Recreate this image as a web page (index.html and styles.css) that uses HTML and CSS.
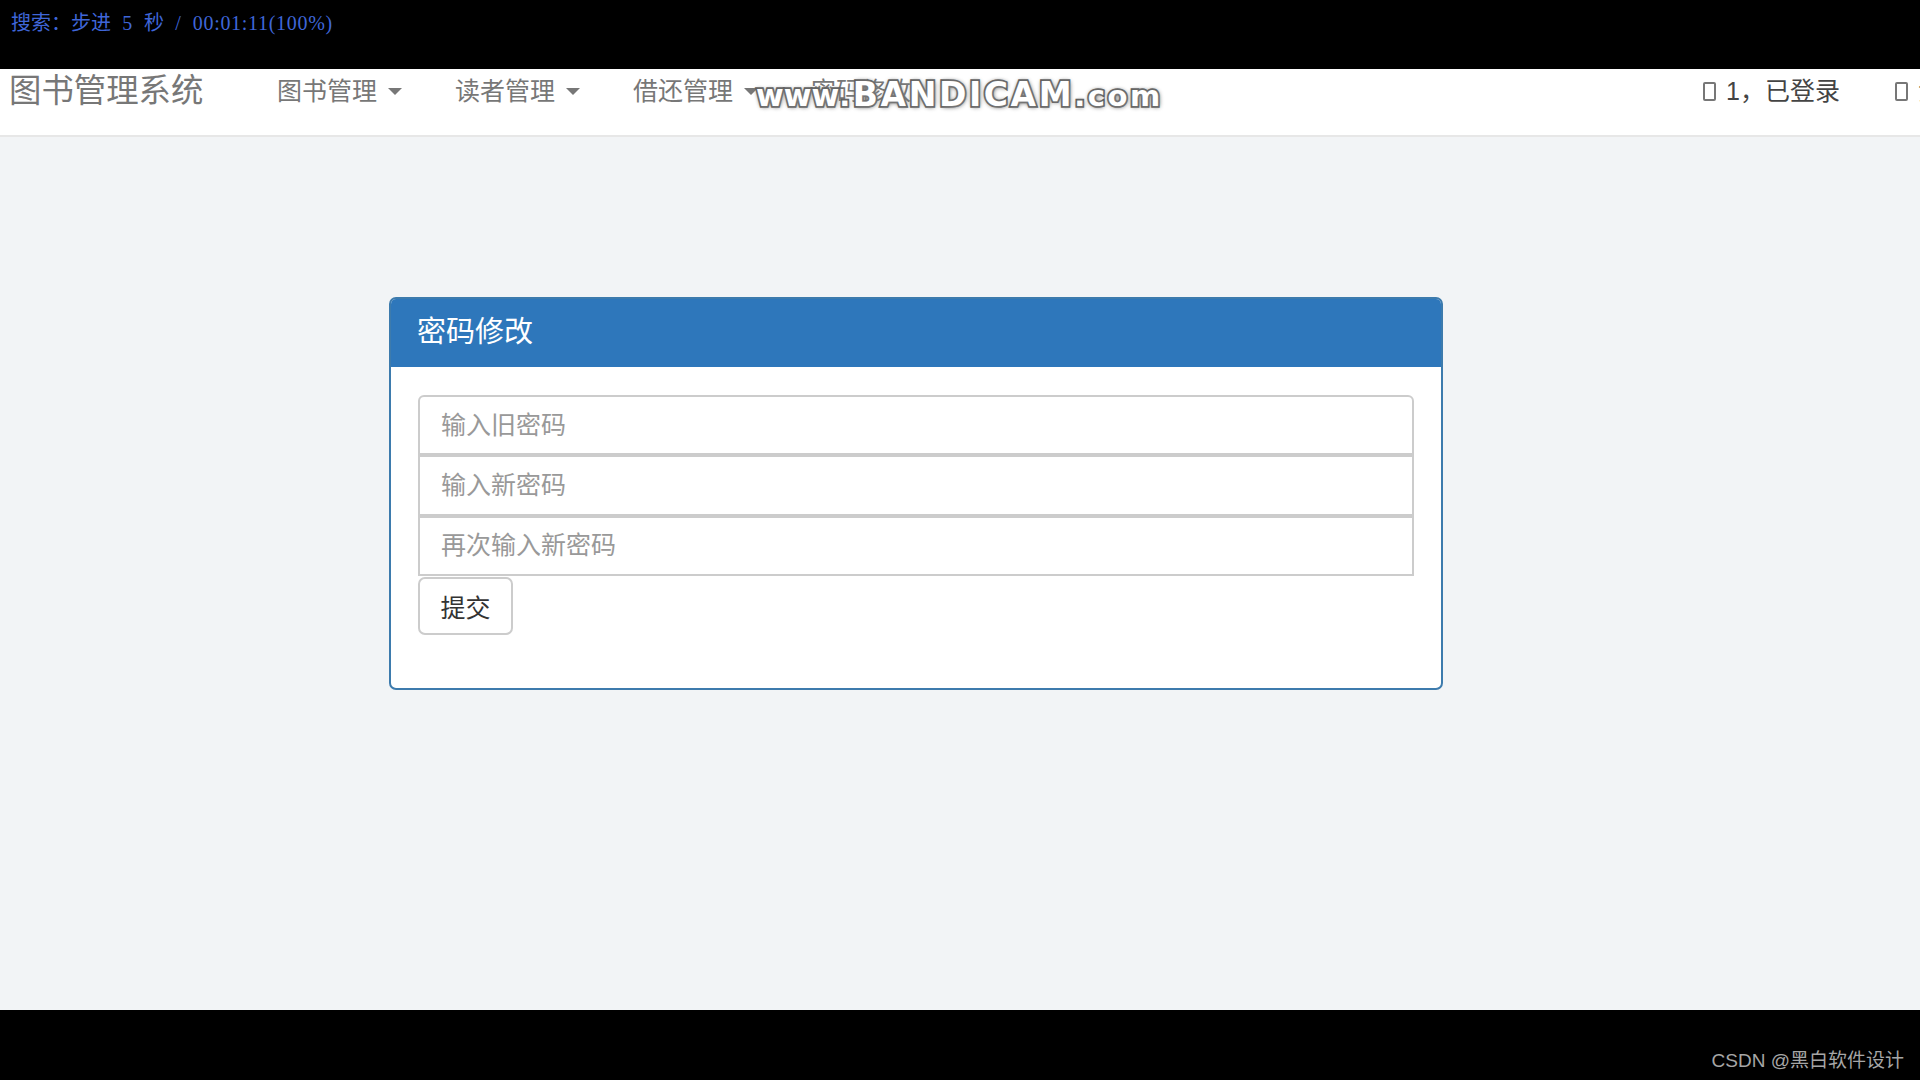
FILE: index.html
```html
<!DOCTYPE html>
<html lang="zh-CN">
<head>
  <meta charset="UTF-8">
  <title>图书管理系统</title>
  <link rel="stylesheet" href="styles.css">
</head>
<body>

  <div class="player-top">
    <span class="osd"><span class="osd-cjk">搜索：步进</span> 5 <span class="osd-cjk">秒</span> / 00:01:11(100%)</span>
  </div>

  <nav class="navbar">
    <a class="brand">图书管理系统</a>
    <ul class="nav-menu">
      <li>图书管理<span class="caret"></span></li>
      <li>读者管理<span class="caret"></span></li>
      <li>借还管理<span class="caret"></span></li>
      <li>密码修改</li>
    </ul>
    <div class="nav-right">
      <span class="nav-user"><span class="tofu"></span>1，已登录</span>
      <span class="nav-user"><span class="tofu"></span>注销</span>
    </div>
    <div class="watermark"><span class="wm-www">www</span><span class="wm-com">.</span><span class="wm-name">BANDICAM</span><span class="wm-com">.com</span></div>
  </nav>

  <main class="content">
    <section class="panel">
      <div class="panel-heading">密码修改</div>
      <form class="panel-body">
        <input class="form-input" type="password" placeholder="输入旧密码">
        <input class="form-input" type="password" placeholder="输入新密码">
        <input class="form-input" type="password" placeholder="再次输入新密码">
        <button class="btn" type="button">提交</button>
      </form>
    </section>
  </main>

  <footer class="player-bottom">
    <span class="credit">CSDN @黑白软件设计</span>
  </footer>

</body>
</html>
```
FILE: styles.css
```css
html, body {
  margin: 0;
  padding: 0;
  height: 100%;
}
body {
  display: flex;
  flex-direction: column;
  width: 1920px;
  height: 1080px;
  overflow: hidden;
  background: #000;
  font-family: "Liberation Sans", "Noto Sans CJK SC", sans-serif;
}

/* Player bars */
.player-top {
  height: 69px;
  flex: none;
  background: #000;
  padding: 10px 0 0 11px;
  box-sizing: border-box;
}
.osd {
  display: block;
  color: #3f66d8;
  font-family: "Liberation Serif", "Noto Sans CJK SC", serif;
  font-size: 20px;
  letter-spacing: 0.7px;
  word-spacing: 5.5px;
  line-height: 24px;
  white-space: pre;
}
.osd-cjk {
  font-family: "Noto Sans CJK SC", sans-serif;
  letter-spacing: 0;
}
.player-bottom {
  height: 70px;
  flex: none;
  background: #000;
  display: flex;
  justify-content: flex-end;
  align-items: flex-start;
  padding: 39px 16px 0 0;
  box-sizing: border-box;
}
.credit {
  color: #a6a6a6;
  font-size: 19px;
  line-height: 24px;
}

/* Navbar */
.navbar {
  position: relative;
  height: 68px;
  flex: none;
  box-sizing: border-box;
  background: #fff;
  border-bottom: 2px solid #e7e7e7;
  display: flex;
  align-items: flex-start;
  color: #777;
  overflow: hidden;
}
.brand {
  margin-left: 9px;
  font-size: 32.4px;
  line-height: 44px;
  width: 268px;
  flex: none;
}
.nav-menu {
  list-style: none;
  margin: 0;
  padding: 0;
  display: flex;
  font-size: 25px;
  line-height: 36px;
  padding-top: 4px;
}
.nav-menu li {
  display: flex;
  align-items: center;
  width: 178px;
  flex: none;
}
.caret {
  width: 0;
  height: 0;
  margin-left: 11px;
  border-top: 7px solid #777;
  border-left: 7px solid transparent;
  border-right: 7px solid transparent;
}
.nav-right {
  position: absolute;
  top: 4px;
  left: 1703px;
  display: flex;
  gap: 55px;
  font-size: 25px;
  line-height: 36px;
  color: #444;
  white-space: nowrap;
}
.nav-user {
  display: flex;
  align-items: center;
}
.tofu {
  width: 13px;
  height: 19px;
  box-sizing: border-box;
  border: 2px solid #777;
  border-radius: 2px;
  margin-right: 10px;
}

/* BANDICAM watermark, lies over the menu */
.watermark {
  position: absolute;
  top: 8px;
  left: 756px;
  color: #fff;
  font-family: "DejaVu Sans", sans-serif;
  font-weight: bold;
  line-height: 36px;
  white-space: nowrap;
  -webkit-text-stroke: 3.5px #5a5a5a;
  paint-order: stroke fill;
  text-shadow: 0 0 4px #777, 1px 1px 5px #888;
}
.wm-www {
  font-size: 30px;
}
.wm-name {
  font-size: 33px;
  letter-spacing: 2.6px;
}
.wm-com {
  font-size: 29px;
  letter-spacing: 2.6px;
}

/* Panel */
.content {
  flex: 1;
  background: #f2f4f6;
  padding: 160px 0 0 389px;
  box-sizing: border-box;
}
.panel {
  width: 1054px;
  height: 393px;
  box-sizing: border-box;
  background: #fff;
  border: 2px solid #3d7bad;
  border-radius: 7px;
  overflow: hidden;
}
.panel-heading {
  height: 68px;
  box-sizing: border-box;
  background: #2e77bb;
  color: #fff;
  font-size: 29px;
  line-height: 66px;
  padding-left: 26px;
}
.panel-body {
  display: flex;
  flex-direction: column;
  align-items: flex-start;
  padding: 28px 27px 0 27px;
}
.form-input {
  display: block;
  width: 100%;
  height: 60.33px;
  box-sizing: border-box;
  border: 2px solid #ccc;
  background: #fff;
  padding: 0 21px;
  font-family: inherit;
  font-size: 25px;
  color: #555;
  outline: none;
}
.form-input:first-child {
  border-radius: 6px 6px 0 0;
}
.form-input::placeholder {
  color: #999;
}
.btn {
  height: 58px;
  width: 95px;
  margin-top: 1px;
  border: 2px solid #ccc;
  border-radius: 7px;
  background: #fff;
  color: #333;
  font-family: inherit;
  font-size: 25px;
  padding: 0;
}
```
